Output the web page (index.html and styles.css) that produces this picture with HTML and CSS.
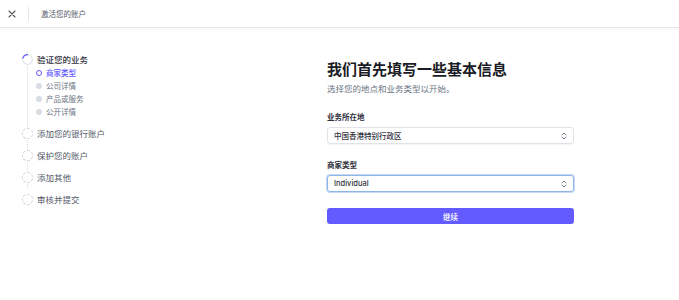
FILE: index.html
```html
<!DOCTYPE html>
<html lang="zh-CN">
<head>
  <meta charset="UTF-8" />
  <meta name="viewport" content="width=device-width, initial-scale=1.0"/>
  <title>激活您的账户</title>
  <link rel="stylesheet" href="styles.css">
</head>
<body>
  <header class="topbar">
    <button class="close" aria-label="关闭">
      <svg width="8" height="8" viewBox="0 0 8 8"><path d="M1 1l6 6M7 1L1 7" stroke="#555" stroke-width="1.1" stroke-linecap="round"/></svg>
    </button>
    <span class="divider"></span>
    <span class="topbar-title">激活您的账户</span>
  </header>
  <main class="layout">
    <nav class="sidebar">
      <ul class="steps">
        <li class="step active">
          <svg class="step-icon" width="11" height="11" viewBox="0 0 11 11">
            <circle cx="5.5" cy="5.5" r="4.8" fill="#fff" stroke="#e3e5ea" stroke-width="1.2"/>
            <path d="M5.5 0.7A4.8 4.8 0 0 0 0.9 4.2" fill="none" stroke="#635bff" stroke-width="1.2" stroke-linecap="round"/>
          </svg>
          <span>验证您的业务</span>
        </li>
        <li>
          <ul class="substeps">
            <li class="substep current"><i class="dot"></i>商家类型</li>
            <li class="substep"><i class="dot"></i>公司详情</li>
            <li class="substep"><i class="dot"></i>产品或服务</li>
            <li class="substep"><i class="dot"></i>公开详情</li>
          </ul>
        </li>
        <li class="step"><i class="pending"></i><span>添加您的银行账户</span></li>
        <li class="step"><i class="pending"></i><span>保护您的账户</span></li>
        <li class="step"><i class="pending"></i><span>添加其他</span></li>
        <li class="step last"><i class="pending"></i><span>审核并提交</span></li>
      </ul>
    </nav>
    <section class="form">
      <h1>我们首先填写一些基本信息</h1>
      <p class="sub">选择您的地点和业务类型以开始。</p>
      <div class="field">
        <label>业务所在地</label>
        <div class="select">
          <span>中国香港特别行政区</span>
          <svg width="6" height="8" viewBox="0 0 6 8"><path d="M1 3l2-2 2 2M1 5l2 2 2-2" fill="none" stroke="#6a7383" stroke-width="0.9" stroke-linecap="round" stroke-linejoin="round"/></svg>
        </div>
      </div>
      <div class="field">
        <label>商家类型</label>
        <div class="select focused">
          <span>Individual</span>
          <svg width="6" height="8" viewBox="0 0 6 8"><path d="M1 3l2-2 2 2M1 5l2 2 2-2" fill="none" stroke="#6a7383" stroke-width="0.9" stroke-linecap="round" stroke-linejoin="round"/></svg>
        </div>
      </div>
      <button class="continue">继续</button>
    </section>
  </main>
</body>
</html>
```

FILE: styles.css
```css
body { margin: 0; font-family: Inter, "Noto Sans CJK SC", sans-serif; color: #30313d; background: #fff; }
ul { list-style: none; margin: 0; padding: 0; }

.topbar { height: 28px; display: flex; align-items: center; border-bottom: 1px solid #e6e6e6; box-shadow: 0 1px 2px rgba(0,0,0,0.04); box-sizing: border-box; }
.close { border: 0; background: none; padding: 0; margin-left: 8px; width: 8px; height: 8px; display: flex; }
.divider { width: 1px; height: 14px; background: #e6e6e6; margin-left: 12px; }
.topbar-title { margin-left: 12px; font-size: 7.5px; color: #545969; }

.layout { display: flex; }
.sidebar { width: 327px; flex-shrink: 0; padding: 24px 0 0 22px; box-sizing: border-box; }

.steps { background: linear-gradient(#d6d9df 50%, transparent 0) 5px 8px / 1px 2px repeat-y; }
.step { display: flex; align-items: center; height: 22px; font-size: 8.5px; color: #545969; }
.step.active { height: 14px; color: #30313d; font-weight: 500; }
.step span { margin-left: 4px; background: #fff; }
.step-icon { display: block; }
.pending { display: block; width: 9px; height: 9px; border: 1px dashed #cfd3da; border-radius: 50%; background: #fff; }
.step.last { background: #fff; }
.steps > li:nth-child(2) { padding-bottom: 4px; }

.substeps { padding-left: 14px; }
.substep { display: flex; align-items: center; height: 13px; font-size: 7.5px; color: #6a7383; }
.substep.current { color: #635bff; font-weight: 500; }
.dot { width: 6px; height: 6px; border-radius: 50%; background: #d8dce3; margin-right: 4px; box-sizing: border-box; }
.substep.current .dot { background: #fff; border: 1.2px solid #635bff; }

.form { width: 247px; padding-top: 33px; }
.form h1 { margin: 0; font-size: 15px; line-height: 18px; font-weight: 700; color: #1a1b25; }
.sub { margin: 4px 0 0; font-size: 8.5px; line-height: 12px; color: #6a7383; }
.field { margin-top: 18px; }
.field + .field { margin-top: 17px; }
.field label { display: block; font-size: 7.5px; line-height: 10px; font-weight: 600; color: #30313d; }
.select { margin-top: 4px; height: 17px; box-sizing: border-box; display: flex; align-items: center; justify-content: space-between; padding: 0 6px; border: 1px solid #e0e3e8; border-radius: 3px; box-shadow: 0 1px 1px rgba(0,0,0,0.05); font-size: 7.5px; font-weight: 500; color: #30313d; }
.select.focused { border-color: #8fb4e6; box-shadow: 0 0 0 1px #c4d9f3; }
.continue { display: block; width: 100%; height: 16px; margin-top: 16px; border: 0; border-radius: 3px; background: #635bff; color: #fff; font-family: inherit; font-size: 7.5px; font-weight: 500; }
```
